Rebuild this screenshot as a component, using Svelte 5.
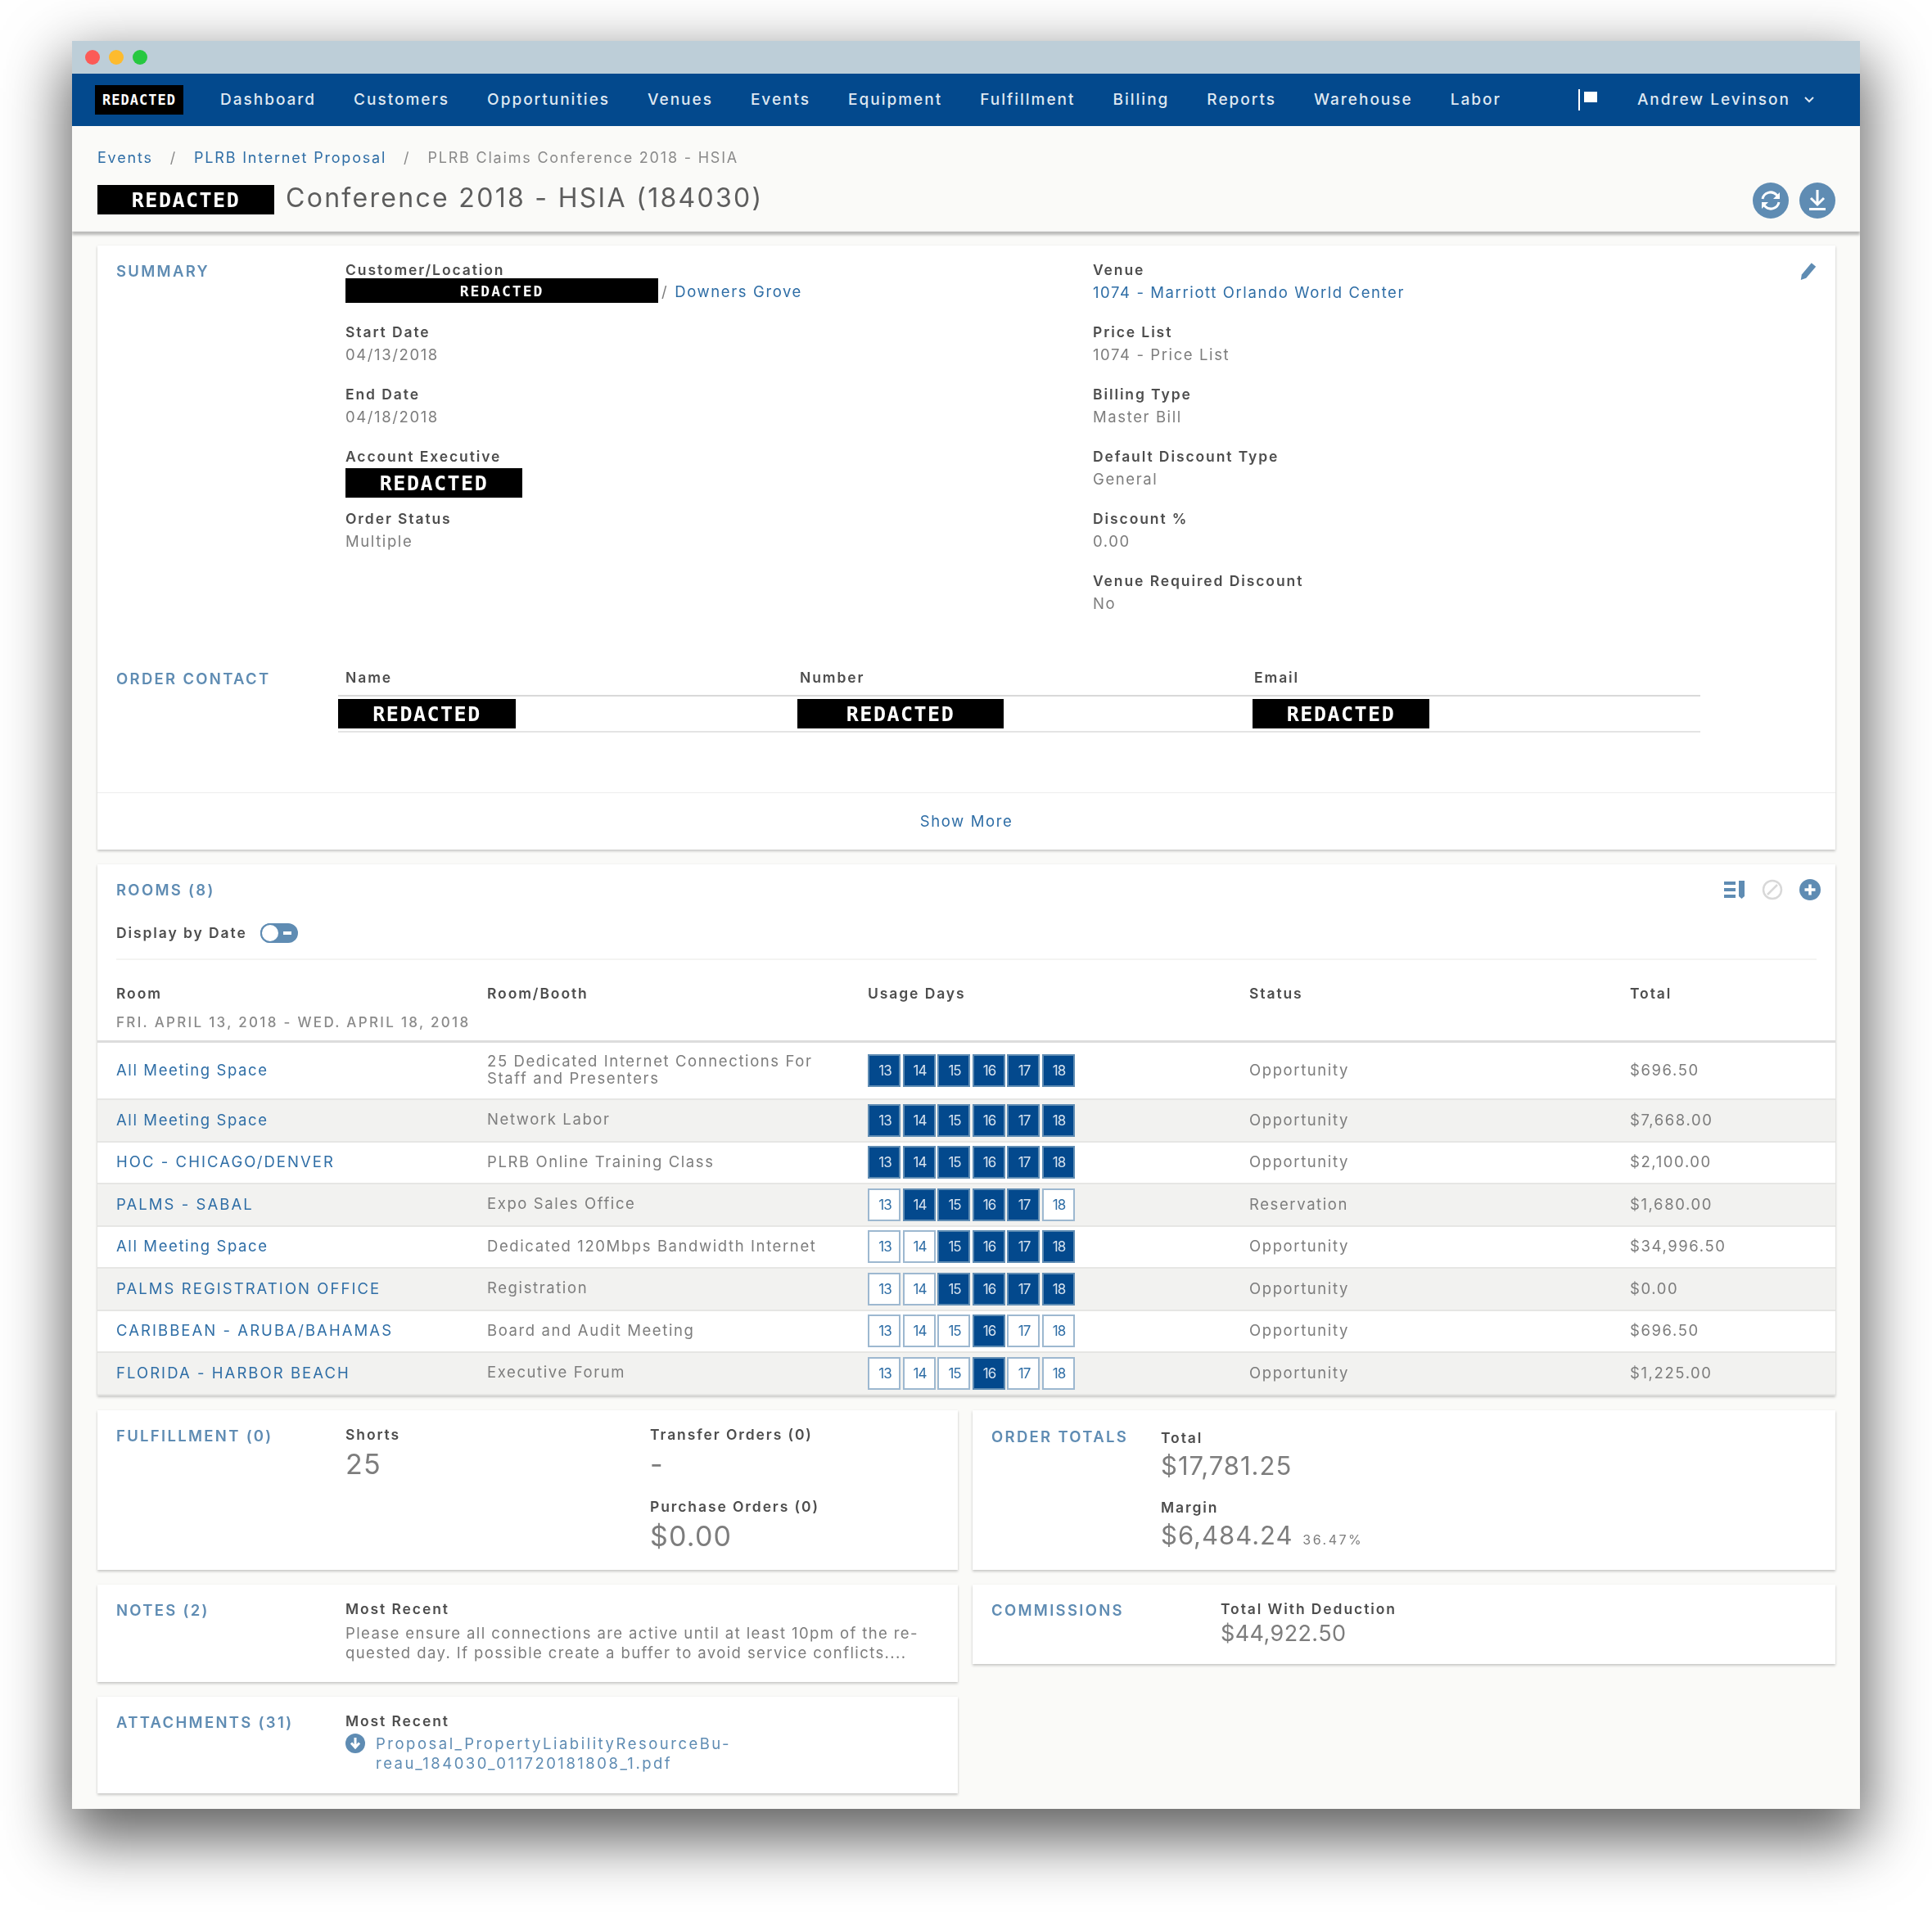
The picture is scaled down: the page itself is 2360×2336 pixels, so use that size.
<script>
  const nav = ['Dashboard', 'Customers', 'Opportunities', 'Venues', 'Events', 'Equipment', 'Fulfillment', 'Billing', 'Reports', 'Warehouse', 'Labor'];
  const days = [13, 14, 15, 16, 17, 18];
  const rooms = [
    { room: 'All Meeting Space', booth: '25 Dedicated Internet Connections For Staff and Presenters', from: 13, to: 18, status: 'Opportunity', total: '$696.50' },
    { room: 'All Meeting Space', booth: 'Network Labor', from: 13, to: 18, status: 'Opportunity', total: '$7,668.00' },
    { room: 'HOC - CHICAGO/DENVER', booth: 'PLRB Online Training Class', from: 13, to: 18, status: 'Opportunity', total: '$2,100.00' },
    { room: 'PALMS - SABAL', booth: 'Expo Sales Office', from: 14, to: 17, status: 'Reservation', total: '$1,680.00' },
    { room: 'All Meeting Space', booth: 'Dedicated 120Mbps Bandwidth Internet', from: 15, to: 18, status: 'Opportunity', total: '$34,996.50' },
    { room: 'PALMS REGISTRATION OFFICE', booth: 'Registration', from: 15, to: 18, status: 'Opportunity', total: '$0.00' },
    { room: 'CARIBBEAN - ARUBA/BAHAMAS', booth: 'Board and Audit Meeting', from: 16, to: 16, status: 'Opportunity', total: '$696.50' },
    { room: 'FLORIDA - HARBOR BEACH', booth: 'Executive Forum', from: 16, to: 16, status: 'Opportunity', total: '$1,225.00' }
  ];
  const rightFields = [
    ['Price List', '1074 - Price List'],
    ['Billing Type', 'Master Bill'],
    ['Default Discount Type', 'General'],
    ['Discount %', '0.00'],
    ['Venue Required Discount', 'No']
  ];
</script>

<div class="page">
  <div class="window">
    <div class="titlebar">
      <span class="dot red"></span><span class="dot yellow"></span><span class="dot green"></span>
    </div>

    <nav class="nav">
      <span class="logo">REDACTED</span>
      <div class="nav-items">
        {#each nav as item}<span>{item}</span>{/each}
      </div>
      <svg class="flag" width="24" height="26" viewBox="0 0 24 26"><path d="M0 0h2v26H0z" fill="#fff" /><path d="M7 3h16v13H7z" fill="#fff" /></svg>
      <span class="user">Andrew Levinson</span>
      <svg class="chev" width="14" height="10" viewBox="0 0 14 10"><path d="M2 2l5 5 5-5" fill="none" stroke="#dfe8f2" stroke-width="2" /></svg>
    </nav>

    <header class="head">
      <div class="crumbs">
        <span class="link">Events</span><i>/</i><span class="link">PLRB Internet Proposal</span><i>/</i><span>PLRB Claims Conference 2018 - HSIA</span>
      </div>
      <div class="title-row">
        <span class="black title-black">REDACTED</span>
        <h1>Conference 2018 - HSIA (184030)</h1>
        <div class="head-actions">
          <svg width="44" height="44" viewBox="0 0 44 44"><circle cx="22" cy="22" r="22" fill="#5f8cb3" /><path d="M12 20a10 10 0 0 1 17-5l3 3M32 24a10 10 0 0 1-17 5l-3-3" fill="none" stroke="#fff" stroke-width="3" /><path d="M33 12v8h-8zM11 32v-8h8z" fill="#fff" /></svg>
          <svg width="44" height="44" viewBox="0 0 44 44"><circle cx="22" cy="22" r="22" fill="#5f8cb3" /><path d="M22 9v17M14 19l8 8 8-8" fill="none" stroke="#fff" stroke-width="3" /><path d="M12 31h20v3H12z" fill="#fff" /></svg>
        </div>
      </div>
    </header>

    <main class="content">
      <section class="card summary">
        <div class="summary-body">
          <div class="sum-grid">
            <h2>SUMMARY</h2>
            <div class="col">
              <div class="field">
                <label>Customer/Location</label>
                <div class="cust"><span class="black cust-black">REDACTED</span><span class="val slash">/</span><span class="link val">Downers Grove</span></div>
              </div>
              <div class="field"><label>Start Date</label><span class="val">04/13/2018</span></div>
              <div class="field"><label>End Date</label><span class="val">04/18/2018</span></div>
              <div class="field ae"><label>Account Executive</label><span class="black ae-black">REDACTED</span></div>
              <div class="field"><label>Order Status</label><span class="val">Multiple</span></div>
            </div>
            <div class="col">
              <div class="field"><label>Venue</label><span class="link val">1074 - Marriott Orlando World Center</span></div>
              {#each rightFields as f}
                <div class="field"><label>{f[0]}</label><span class="val">{f[1]}</span></div>
              {/each}
            </div>
            <svg class="pencil" width="25" height="26" viewBox="0 0 22 24"><path d="M3 17L14 4l5 4L8 21l-6 2z" fill="#5f8cb3" /></svg>
          </div>

          <div class="contact">
            <h2>ORDER CONTACT</h2>
            <div class="contact-table">
              <div class="contact-head"><label>Name</label><label>Number</label><label>Email</label></div>
              <div class="contact-row">
                <span class="black c1">REDACTED</span>
                <span class="black c2">REDACTED</span>
                <span class="black c3">REDACTED</span>
              </div>
            </div>
          </div>
        </div>
        <div class="show-more">Show More</div>
      </section>

      <section class="card rooms">
        <div class="rooms-top">
          <div class="rooms-title">
            <h2>ROOMS (8)</h2>
            <div class="room-icons">
              <svg width="26" height="24" viewBox="0 0 26 24"><path d="M0 2h14v4H0zM0 10h14v4H0zM0 18h14v4H0z" fill="#5f8cb3" /><path d="M18 1h7v19l-3.500 3-3.500-3z" fill="#5f8cb3" /></svg>
              <svg width="26" height="26" viewBox="0 0 26 26"><circle cx="13" cy="13" r="11" fill="none" stroke="#d8d8d8" stroke-width="2.500" /><path d="M7 19L19 7" stroke="#d8d8d8" stroke-width="2.500" /></svg>
              <svg width="26" height="26" viewBox="0 0 26 26"><circle cx="13" cy="13" r="13" fill="#5f8cb3" /><path d="M13 6.500v13M6.500 13h13" stroke="#fff" stroke-width="3.500" /></svg>
            </div>
          </div>
          <div class="display">
            <label>Display by Date</label>
            <span class="toggle"><span class="knob"></span><span class="minus"></span></span>
          </div>
        </div>

        <div class="thead">
          <div class="thead-row">
            <label>Room</label><label>Room/Booth</label><label>Usage Days</label><label>Status</label><label>Total</label>
          </div>
          <div class="date-range">FRI. APRIL 13, 2018 - WED. APRIL 18, 2018</div>
        </div>

        {#each rooms as r, i}
          <div class="row" class:alt={i % 2 === 1} class:first={i === 0}>
            <span class="link" class:caps={r.room === r.room.toUpperCase()}>{r.room}</span>
            <span class="booth">{r.booth}</span>
            <div class="chips">
              {#each days as d}
                <span class="chip" class:on={d >= r.from && d <= r.to}>{d}</span>
              {/each}
            </div>
            <span>{r.status}</span>
            <span>{r.total}</span>
          </div>
        {/each}
      </section>

      <div class="lower">
        <div class="lower-col">
          <section class="card box fulfil">
            <h2>FULFILLMENT (0)</h2>
            <div class="f-col"><label>Shorts</label><span class="big">25</span></div>
            <div class="f-col">
              <label>Transfer Orders (0)</label><span class="big dash">-</span>
              <label class="second">Purchase Orders (0)</label><span class="big">$0.00</span>
            </div>
          </section>
          <section class="card box notes">
            <h2>NOTES (2)</h2>
            <div>
              <label>Most Recent</label>
              <p>Please ensure all connections are active until at least 10pm of the re-<br />quested day. If possible create a buffer to avoid service conflicts....</p>
            </div>
          </section>
          <section class="card box attach">
            <h2>ATTACHMENTS (31)</h2>
            <div>
              <label>Most Recent</label>
              <div class="file">
                <svg width="24" height="24" viewBox="0 0 24 24"><circle cx="12" cy="12" r="12" fill="#5f8cb3" /><path d="M12 5v11M7 11.500l5 5.500 5-5.500" fill="none" stroke="#fff" stroke-width="3" /></svg>
                <span class="file-name">Proposal_PropertyLiabilityResourceBu-<br />reau_184030_011720181808_1.pdf</span>
              </div>
            </div>
          </section>
        </div>
        <div class="lower-col">
          <section class="card box totals">
            <h2>ORDER TOTALS</h2>
            <div>
              <label>Total</label><span class="big">$17,781.25</span>
              <label class="second">Margin</label><span class="big">$6,484.24 <small>36.47%</small></span>
            </div>
          </section>
          <section class="card box comm">
            <h2>COMMISSIONS</h2>
            <div><label>Total With Deduction</label><span class="big mid">$44,922.50</span></div>
          </section>
        </div>
      </div>
    </main>
  </div>
</div>

<style>
  :global(body) {
    margin: 0;
    background: #fff;
  }
  .page {
    padding: 50px 88px 126px 88px;
    font-family: Inter, "Liberation Sans", sans-serif;
    font-size: 18.500px;
    letter-spacing: 1.600px;
    color: #7d7d7d;
  }
  .window {
    height: 2160px;
    background: #fafaf8;
    box-shadow: 0 30px 70px 8px rgba(0, 0, 0, 0.62);
    filter: blur(0.7px);
    overflow: hidden;
  }
  .titlebar {
    height: 40px;
    background: #bdced8;
    display: flex;
    align-items: center;
    gap: 11px;
    padding-left: 16px;
  }
  .dot { width: 18px; height: 18px; border-radius: 50%; }
  .red { background: #fc5b57; }
  .yellow { background: #fdbb2e; }
  .green { background: #27c840; }

  .nav {
    height: 64px;
    background: #03498d;
    display: flex;
    align-items: center;
    padding-left: 28px;
    color: #dfe8f2;
    font-weight: 500;
    font-size: 19px;
    letter-spacing: 2px;
  }
  .logo {
    width: 108px;
    height: 36px;
    background: #000;
    color: #fff;
    font-family: "DejaVu Sans Mono", monospace;
    font-size: 17px;
    font-weight: 700;
    letter-spacing: 1px;
    display: flex;
    align-items: center;
    justify-content: center;
  }
  .nav-items {
    display: flex;
    gap: 46px;
    margin-left: 45px;
    padding-bottom: 1px;
    flex: 1;
  }
  .flag { margin-right: 48px; }
  .user { margin-right: 16px; padding-bottom: 1px; }
  .chev { margin-right: 55px; }

  .head {
    height: 129px;
    box-sizing: border-box;
    padding: 29px 30px 0 31px;
    border-bottom: 1px solid #eee;
    box-shadow: 0 4px 3px rgba(0, 0, 0, 0.25);
    position: relative;
  }
  .crumbs { display: flex; font-size: 18px; line-height: 20px; letter-spacing: 1.800px; color: #8a8a8a; }
  .crumbs i { font-style: normal; margin: 0 21px; }
  .link { color: #2f6ea6; }
  .caps { letter-spacing: 2.050px; }
  .title-row {
    display: flex;
    align-items: center;
    margin-top: 23px;
    height: 36px;
  }
  .black {
    background: #000;
    color: #fff;
    font-family: "DejaVu Sans Mono", monospace;
    font-weight: 700;
    display: flex;
    align-items: center;
    justify-content: center;
    letter-spacing: 1.500px;
  }
  .title-black { width: 216px; height: 36px; font-size: 25px; }
  h1 {
    margin: 0 0 0 14px;
    padding-bottom: 6px;
    font-size: 32px;
    font-weight: 400;
    letter-spacing: 2.300px;
    color: #5d5d5d;
  }
  .head-actions { margin-left: auto; display: flex; gap: 13px; margin-top: 1px; }

  .content { padding: 17px 30px 0 31px; }
  .card {
    background: #fff;
    box-shadow: 0 2px 3px rgba(0, 0, 0, 0.2), 0 0 2px rgba(0, 0, 0, 0.06);
  }
  h2 {
    margin: 0;
    font-size: 18.500px;
    font-weight: 600;
    letter-spacing: 2.300px;
    color: #5f8cb3;
    line-height: 22px;
  }
  label {
    display: block;
    font-size: 17.500px;
    font-weight: 600;
    letter-spacing: 1.900px;
    line-height: 20px;
    color: #4d4d4d;
  }
  .summary { height: 738px; display: flex; flex-direction: column; }
  .summary-body { flex: 1; padding: 20px 23px 0; }
  .sum-grid { display: grid; grid-template-columns: 280px 913px 1fr; position: relative; height: 489px; }
  .pencil { position: absolute; right: -3px; top: -3px; }
  .field { height: 76px; }
  .field .val { display: block; margin-top: 7px; line-height: 20px; }
  .field > .link { display: block; margin-top: 7px; line-height: 20px; }
  .cust { display: flex; align-items: flex-start; }
  .cust .val { display: inline; margin: 1px 0 0; line-height: 30px; }
  .cust .slash { margin: 1px 8px 0 0; }
  .cust-black { width: 382px; height: 30px; font-size: 18px; letter-spacing: 2px; margin-right: 4px; }
  .ae-black { width: 216px; height: 36px; font-size: 25px; margin-top: 4px; }
  .contact { display: grid; grid-template-columns: 271px 1664px; margin-top: 9px; }
  .contact-head { display: grid; grid-template-columns: 555px 555px 1fr; padding: 0 9px; height: 20px; }
  .contact-row {
    margin-top: 11px;
    height: 46px;
    border-top: 2px solid #d9d9d9;
    border-bottom: 2px solid #e4e4e4;
    box-sizing: border-box;
    display: grid;
    grid-template-columns: 561px 556px 1fr;
    align-items: center;
  }
  .contact-row .black { height: 36px; font-size: 25px; }
  .c1 { width: 217px; }
  .c2 { width: 252px; }
  .c3 { width: 216px; }
  .show-more {
    height: 69px;
    border-top: 1px solid #eee;
    text-align: center;
    line-height: 68px;
    color: #2f6ea6;
    flex: none;
  }

  .rooms { margin-top: 18px; }
  .rooms-top { padding: 20px 23px 0; }
  .rooms-title { display: flex; justify-content: space-between; align-items: center; height: 22px; }
  .room-icons { display: flex; gap: 20px; align-items: center; margin-right: -5px; }
  .display {
    display: flex;
    align-items: center;
    gap: 16px;
    margin-top: 30px;
    height: 24px;
    padding-bottom: 19px;
    border-bottom: 2px solid #f4f4f2;
  }
  .toggle {
    width: 46px;
    height: 24px;
    box-sizing: border-box;
    border-radius: 12px;
    background: #5f8cb3;
    position: relative;
    display: block;
  }
  .knob {
    position: absolute;
    left: 0;
    top: 0;
    width: 24px;
    height: 24px;
    box-sizing: border-box;
    border: 2px solid #5f8cb3;
    border-radius: 50%;
    background: #fff;
  }
  .minus { position: absolute; left: 28px; top: 10px; width: 10px; height: 4px; background: #fff; }
  .thead { padding: 31px 23px 0; height: 101px; box-sizing: border-box; border-bottom: 3px solid #dcdcdc; }
  .thead-row, .row { display: grid; grid-template-columns: 453px 465px 466px 465px 1fr; }
  .date-range { margin-top: 15px; font-weight: 500; font-size: 17px; letter-spacing: 2.300px; color: #8a8a8a; white-space: nowrap; }
  .row {
    height: 51.500px;
    box-sizing: border-box;
    padding: 0 23px;
    align-items: center;
    border-bottom: 2px solid #e6e6e4;
  }
  .row > span { padding-bottom: 2px; }
  .row.first { height: 70px; }
  .row.alt { background: #f2f2f0; }
  .booth { line-height: 21px; max-width: 440px; }
  .chips { display: flex; gap: 2.500px; }
  .chip {
    width: 40px;
    height: 40px;
    box-sizing: border-box;
    background: #fff;
    border: 2px solid #9db8d0;
    color: #2f6ea6;
    font-size: 17px;
    letter-spacing: -1px;
    padding-left: 2px;
    display: flex;
    align-items: center;
    justify-content: center;
  }
  .chip.on { background: #03498d; border-color: #5f8cb3; color: #d6e2ee; }

  .lower { display: grid; grid-template-columns: 1051px 1054px; gap: 18px; margin-top: 18px; align-items: start; }
  .lower-col { display: flex; flex-direction: column; gap: 18px; }
  .box { box-sizing: border-box; padding: 20px 23px; display: grid; }
  .fulfil { height: 195px; grid-template-columns: 280px 372px 1fr; }
  .notes { height: 119px; grid-template-columns: 280px 1fr; margin-top: 0; }
  .attach { height: 118px; grid-template-columns: 280px 1fr; }
  .totals { height: 195px; grid-template-columns: 207px 1fr; padding-top: 24px; }
  .totals h2 { margin-top: -3px; }
  .comm { height: 97px; grid-template-columns: 280px 1fr; }
  .big { display: block; font-size: 31px; line-height: 40px; letter-spacing: 1px; color: #7d7d7d; margin-top: 4px; }
  .big.mid { font-size: 27px; line-height: 36px; letter-spacing: 0.400px; margin-top: 2px; }
  .f-col .big { font-size: 34px; letter-spacing: 1.200px; margin-top: 6px; }
  .big small { font-size: 16px; letter-spacing: 2.500px; margin-left: 2px; }
  .second { margin-top: 21px; }
  .f-col .second { margin-top: 22px; }
  p { margin: 7px 0 0; line-height: 24px; white-space: nowrap; letter-spacing: 1.400px; }
  .file { display: flex; gap: 13px; margin-top: 5px; }
  .file-name { color: #5f8cb3; line-height: 24px; white-space: nowrap; letter-spacing: 2.500px; }
</style>
